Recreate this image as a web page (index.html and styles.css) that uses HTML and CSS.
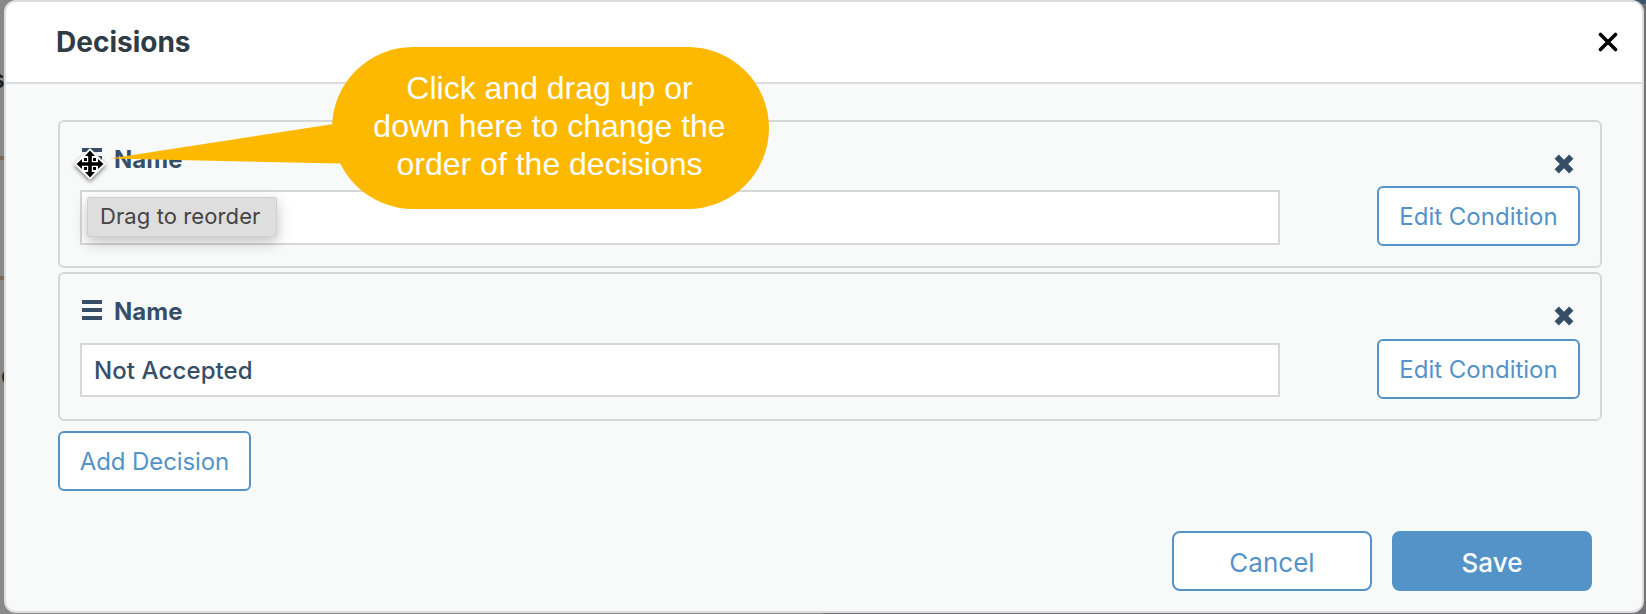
FILE: index.html
```
<!DOCTYPE html>
<html>
<head>
  <meta charset="utf-8">
  <meta name="viewport" content="width=device-width">
  <title>Decisions</title>
  <link rel="stylesheet" href="styles.css">
</head>
<body>
  <div class="behind behind-s">s</div>
  <div class="behind behind-o">o</div>
  <div class="behind-line line1"></div>
  <div class="behind-line line2"></div>
  <div class="behind-bar"></div>
  <div class="modal">
    <div class="modal-header">
      <h1>Decisions</h1>
      <svg class="close" viewBox="0 0 20 20"><path d="M2.500 2.500L17.500 17.500M17.500 2.500L2.500 17.500"/></svg>
    </div>
    <div class="modal-body">
      <div class="card">
        <div class="field">
          <div class="label">
            <svg class="handle" viewBox="0 0 20 20"><path d="M0 0h20v4H0zM0 8h20v4H0zM0 16h20v4H0z"/></svg>
            <span>Name</span>
          </div>
          <div class="input"></div>
        </div>
        <div class="actions">
          <svg class="remove" viewBox="0 0 20 20"><path d="M2.700 2.700L17.300 17.300M17.300 2.700L2.700 17.300"/></svg>
          <button class="btn">Edit Condition</button>
        </div>
      </div>
      <div class="card card2">
        <div class="field">
          <div class="label">
            <svg class="handle" viewBox="0 0 20 20"><path d="M0 0h20v4H0zM0 8h20v4H0zM0 16h20v4H0z"/></svg>
            <span>Name</span>
          </div>
          <div class="input">Not Accepted</div>
        </div>
        <div class="actions">
          <svg class="remove" viewBox="0 0 20 20"><path d="M2.700 2.700L17.300 17.300M17.300 2.700L2.700 17.300"/></svg>
          <button class="btn">Edit Condition</button>
        </div>
      </div>
      <button class="btn add">Add Decision</button>
    </div>
    <div class="modal-footer">
      <button class="btn cancel">Cancel</button>
      <button class="btn save">Save</button>
    </div>
  </div>

  <div class="tooltip">Drag to reorder</div>

  <svg class="cursor" viewBox="0 0 36 36">
    <path class="cursor-bg" d="M18 2L34 18L18 34L2 18z"/>
    <path d="M18 4.500l5 5.500h-3.200v6.200H26V13l5.500 5L26 23v-3.200h-6.200V26H23l-5 5.500L13 26h3.200v-6.200H10V23l-5.500-5L10 13v3.200h6.200V10H13z"/>
    <path d="M12 12h3v3h-3zM21 12h3v3h-3zM12 21h3v3h-3zM21 21h3v3h-3z"/>
  </svg>

  <div class="callout">
    <svg class="tail" viewBox="0 0 240 50"><path d="M0 38.500L230 3V43.500z"/></svg>
    <p>Click and drag up or<br>down here to change the<br>order of the decisions</p>
  </div>
</body>
</html>
```

FILE: styles.css
```
*{
  box-sizing: border-box;
  margin: 0;
  padding: 0;
}
body{
  height: 614px;
  overflow: hidden;
  padding-left: 4px;
  background: linear-gradient(to right, #8b8987 50%, #727274 50%);
  font-family: Inter, "Liberation Sans", sans-serif;
}
/* page under the modal */
.behind{
  position: absolute;
  left: -9px;
  font-size: 25px;
  font-weight: 600;
  line-height: 30px;
  color: #222;
}
.behind-s{
  top: 64px;
}
.behind-o{
  top: 360px;
  left: 1px;
}
.behind-line{
  position: absolute;
  left: 0;
  width: 5px;
  height: 4px;
  background: #76695a;
}
.line1{
  top: 156px;
}
.line2{
  top: 276px;
}
.behind-bar{
  position: absolute;
  right: 0;
  top: 0;
  width: 12px;
  height: 4px;
  background: #3a566f;
}
.modal{
  position: relative;
  display: flex;
  flex-direction: column;
  width: 1640px;
  height: 613px;
  overflow: hidden;
  border: 2px solid #dcdce1;
  border-radius: 12px;
  background: #f8faf9;
}
.modal-header{
  display: flex;
  align-items: center;
  justify-content: space-between;
  height: 82px;
  padding: 0 24px 0 50px;
  border-bottom: 2px solid #dcdce1;
  background: #fff;
}
h1{
  font-size: 28px;
  font-weight: 700;
  color: #2f3b45;
}
.close{
  width: 20px;
  height: 20px;
  margin-bottom: 1px;
  fill: none;
  stroke: #000;
  stroke-width: 3.6;
  stroke-linecap: round;
}
.modal-body{
  flex: 1;
  padding: 36px 40px 0 52px;
}
.card{
  display: flex;
  justify-content: space-between;
  height: 148px;
  margin-bottom: 4px;
  padding: 0 20px;
  border: 2px solid #d6d8d8;
  border-radius: 6px;
}
.field{
  width: 1200px;
}
.label{
  display: flex;
  height: 68px;
  padding: 23px 0 0 2px;
  font-size: 24px;
  font-weight: 700;
  line-height: 30px;
  color: #364f67;
}
.handle{
  width: 20px;
  height: 20px;
  margin: 3px 12px 0 0;
  fill: #364f67;
}
.input{
  height: 55px;
  padding-left: 12px;
  border: 2px solid #d6d8d8;
  background: #fff;
  font-size: 24px;
  font-weight: 500;
  letter-spacing: 0.1px;
  line-height: 51px;
  color: #364f67;
}
.actions{
  display: flex;
  flex-direction: column;
  align-items: flex-end;
  padding-top: 32px;
}
.remove{
  width: 20px;
  height: 20px;
  margin: 0 6px 12px 0;
  fill: none;
  stroke: #364f67;
  stroke-width: 6;
}
.btn{
  width: 203px;
  height: 60px;
  border: 2px solid #5493c8;
  border-radius: 6px;
  background: #fff;
  color: #5493c8;
  font-family: inherit;
  font-size: 24px;
  white-space: nowrap;
}
.card2{
  height: 149px;
  margin-bottom: 10px;
}
.card2 .label{
  height: 69px;
}
.card2 .input{
  height: 54px;
}
.card2 .remove{
  margin-bottom: 13px;
}
.add{
  width: 193px;
  letter-spacing: -0.1px;
}
.modal-footer{
  display: flex;
  justify-content: flex-end;
  gap: 20px;
  padding: 0 50px 20px 0;
}
.modal-footer .btn{
  width: 200px;
  padding-top: 3px;
  border-radius: 8px;
  font-size: 26px;
}
.modal-footer .save{
  background: #5493c8;
  color: #fff;
  font-weight: 500;
}
.tooltip{
  position: absolute;
  left: 87px;
  top: 197px;
  width: 190px;
  height: 40px;
  padding-left: 12px;
  border: 1px solid #d0d0d0;
  border-radius: 2px;
  background: #dedede;
  box-shadow: 0 5px 14px rgba(0, 0, 0, 0.25);
  color: #444;
  font-size: 22px;
  letter-spacing: 0.1px;
  line-height: 36px;
}
.cursor{
  position: absolute;
  left: 72px;
  top: 146px;
  width: 36px;
  height: 36px;
  filter: drop-shadow(0 2px 2px rgba(0, 0, 0, 0.5));
}
.cursor-bg{
  fill: #fff;
}
.callout{
  position: absolute;
  left: 332px;
  top: 47px;
  width: 437px;
  height: 162px;
  padding: 22px 2px 0 0;
  border-radius: 81px;
  background: #fcb900;
  color: #fff;
  font-family: "Liberation Sans", Arial, sans-serif;
  font-size: 32px;
  line-height: 38px;
  text-align: center;
}
.tail{
  position: absolute;
  left: -222px;
  top: 73px;
  width: 240px;
  height: 50px;
  fill: #fcb900;
}
.callout p{
  position: relative;
}
```
